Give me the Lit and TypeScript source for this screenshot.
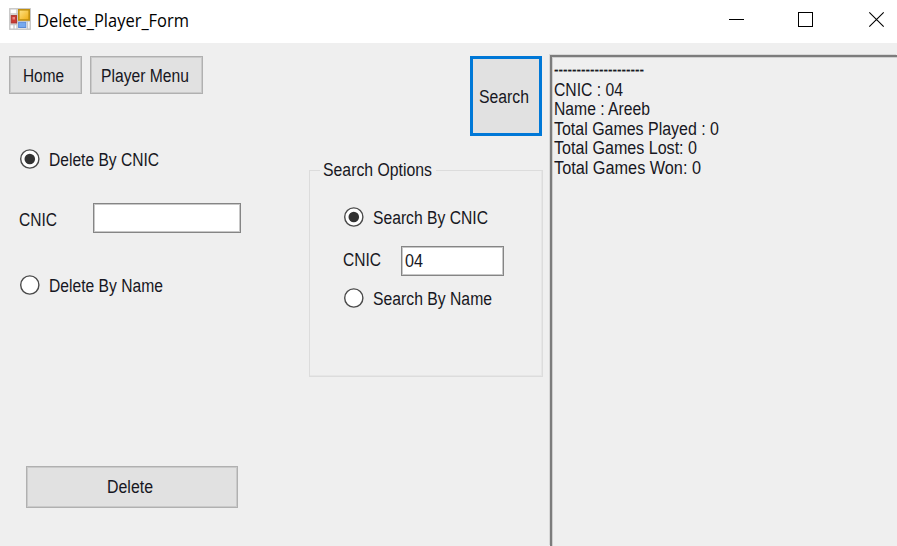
import { LitElement, html, svg, css } from "lit";
import { customElement } from "lit/decorators.js";

// A line of text fitted to the given width, baseline 16px below its top.
const line = (text: string, width: number, cls = "") => html`
  <svg class="line ${cls}" width=${width + 2} height="20">
    <text x="0" y="16" textLength=${width} lengthAdjust="spacingAndGlyphs">${text}</text>
  </svg>`;

const radio = (checked: boolean) => html`
  <svg class="radio" width="20" height="20" viewBox="0 0 20 20">
    <circle cx="9.8" cy="10" r="9.1" fill="#fff" stroke="#4a4a4a" stroke-width="1.4" />
    ${checked ? svg`<circle cx="9.8" cy="10" r="5.3" fill="#333" />` : ""}
  </svg>`;

@customElement("app-root")
export class AppRoot extends LitElement {
  static styles = css`
    :host { display: flex; flex-direction: column; width: 897px; height: 546px; overflow: hidden;
      background: #efefef; font-family: "Liberation Sans", Arial, sans-serif; font-size: 17.6px; color: #151520; }
    * { box-sizing: border-box; }
    svg { display: block; flex: none; overflow: visible; }
    .line text { fill: #171722; white-space: pre; }
    .titlebar { height: 43px; flex: none; background: #fff; display: flex; align-items: flex-start; padding: 8px 13px 0 9px; }
    .title { margin: 3px auto 0 6px; font-family: "Open Sans", "Noto Sans", sans-serif; font-size: 18px; }
    .title text { fill: #000; }
    .controls { display: flex; gap: 54px; margin-top: 4px; }
    .controls svg:last-child { margin-left: 2px; }
    .body { flex: 1; display: grid; grid-template-columns: 309px 241px 347px; min-height: 0; }
    .left { display: flex; flex-direction: column; align-items: flex-start; padding-top: 13px; }
    .middle { display: flex; flex-direction: column; align-items: flex-start; padding-top: 13px; }
    .btn { background: #e1e1e1; border: 1px solid #b0b0b0; box-shadow: inset 0 0 0 1px #cacaca; display: flex; align-items: flex-start; flex: none; }
    .toolbar { display: flex; gap: 8px; margin-left: 9px; }
    .home { width: 73px; height: 38px; padding: 9px 0 0 13px; }
    .menu { width: 113px; height: 38px; padding: 9px 0 0 10px; }
    .search { width: 72px; height: 80px; margin-left: 161px; padding: 28px 0 0 6px; border: 3px solid #0078d7; box-shadow: none; }
    .delete { width: 212px; height: 42px; margin: 171px 0 0 26px; padding: 10px 0 0 80px; }
    .option { display: flex; gap: 9px; height: 20px; }
    .option .line { margin-top: 1px; }
    .by-cnic { margin: 55px 0 0 20px; }
    .by-name { margin: 42px 0 0 20px; }
    .field { display: flex; }
    .cnic { margin: 34px 0 0 19px; }
    .cnic .line { margin-top: 7px; }
    .box { background: #fff; border: 1px solid #858585; box-shadow: inset 0 0 0 1px #c8c8c8; height: 30px; }
    .wide { width: 148px; margin-left: 34px; }
    .narrow { width: 103px; margin-left: 18px; padding: 4px 0 0 3px; }
    .narrow .line { margin-top: 0; }
    .group { width: 234px; height: 217px; margin: 24px 0 0; padding: 0 0 0 33px; border: 1px solid #dcdcdc; box-shadow: inset -1px -1px #e6e6e6; min-width: 0; }
    .group legend { margin-left: -23px; padding: 0 2px 0 3px; height: 20px; }
    .group .option { margin-left: 0.6px; }
    .s-cnic { margin-top: 27px; }
    .s-field { margin-top: 19px; }
    .s-field > .line { margin-top: 4px; }
    .s-name { margin-top: 12px; }
    .result { margin-top: 12px; border: solid #7c7c7c; border-width: 2px 0 0 2px; box-shadow: inset 1px 1px #cfcfcf, -1px -1px #d8d8d8; padding: 3px 0 0 2px; min-height: 0; }
    .result .row { height: 19.5px; }
    .result .row:first-child text { stroke: #171722; stroke-width: 0.15; }
  `;

  render() {
    return html`
      <header class="titlebar">
        <svg width="22" height="22" viewBox="0 0 22 22">
          <defs>
            <linearGradient id="gold" x1="0" y1="0" x2="1" y2="1">
              <stop offset="0" stop-color="#ffe58a" /><stop offset="1" stop-color="#f0ac10" />
            </linearGradient>
          </defs>
          <rect x="0.8" y="0.8" width="20.4" height="20.4" fill="#fff" stroke="#c4c4c4" stroke-width="1.4" />
          <path d="M1 6H9M8 1V21M1 16.5H8M5 16V21M18.5 13V21M8 13H21" stroke="#c9c9c9" stroke-width="1.4" fill="none" />
          <rect x="9.8" y="1.8" width="10.4" height="10.2" fill="url(#gold)" stroke="#c08f10" stroke-width="1.6" />
          <rect x="2.2" y="7.6" width="5.4" height="7.4" fill="#cc3a32" stroke="#a8352f" />
          <path d="M3.5 9H6V11.5H3.5Z" fill="#e98780" />
          <rect x="9.6" y="14.3" width="7.2" height="5.2" fill="#76a9ef" stroke="#5a8ad8" />
        </svg>
        ${line("Delete_Player_Form", 152, "title")}
        <div class="controls">
          <svg width="15" height="15"><path d="M0 7.5H15" stroke="#000" /></svg>
          <svg width="15" height="15"><rect x="0.5" y="0.5" width="14" height="14" fill="none" stroke="#000" /></svg>
          <svg width="15" height="15"><path d="M0.3 0.3L14.7 14.7M14.7 0.3L0.3 14.7" stroke="#000" stroke-width="1.1" /></svg>
        </div>
      </header>
      <main class="body">
        <section class="left">
          <div class="toolbar">
            <div class="btn home">${line("Home", 41)}</div>
            <div class="btn menu">${line("Player Menu", 88)}</div>
          </div>
          <div class="option by-cnic">${radio(true)}${line("Delete By CNIC", 110)}</div>
          <div class="field cnic">${line("CNIC", 38)}<div class="box wide"></div></div>
          <div class="option by-name">${radio(false)}${line("Delete By Name", 114)}</div>
          <div class="btn delete">${line("Delete", 46)}</div>
        </section>
        <section class="middle">
          <div class="btn search">${line("Search", 50)}</div>
          <fieldset class="group">
            <legend>${line("Search Options", 109)}</legend>
            <div class="option s-cnic">${radio(true)}${line("Search By CNIC", 115)}</div>
            <div class="field s-field">${line("CNIC", 38)}<div class="box narrow">${line("04", 18)}</div></div>
            <div class="option s-name">${radio(false)}${line("Search By Name", 119)}</div>
          </fieldset>
        </section>
        <section class="result">
          <div class="row">${line("--------------------", 90)}</div>
          <div class="row">${line("CNIC : 04", 69)}</div>
          <div class="row">${line("Name : Areeb", 96)}</div>
          <div class="row">${line("Total Games Played : 0", 165)}</div>
          <div class="row">${line("Total Games Lost: 0", 143)}</div>
          <div class="row">${line("Total Games Won: 0", 147)}</div>
        </section>
      </main>`;
  }
}
